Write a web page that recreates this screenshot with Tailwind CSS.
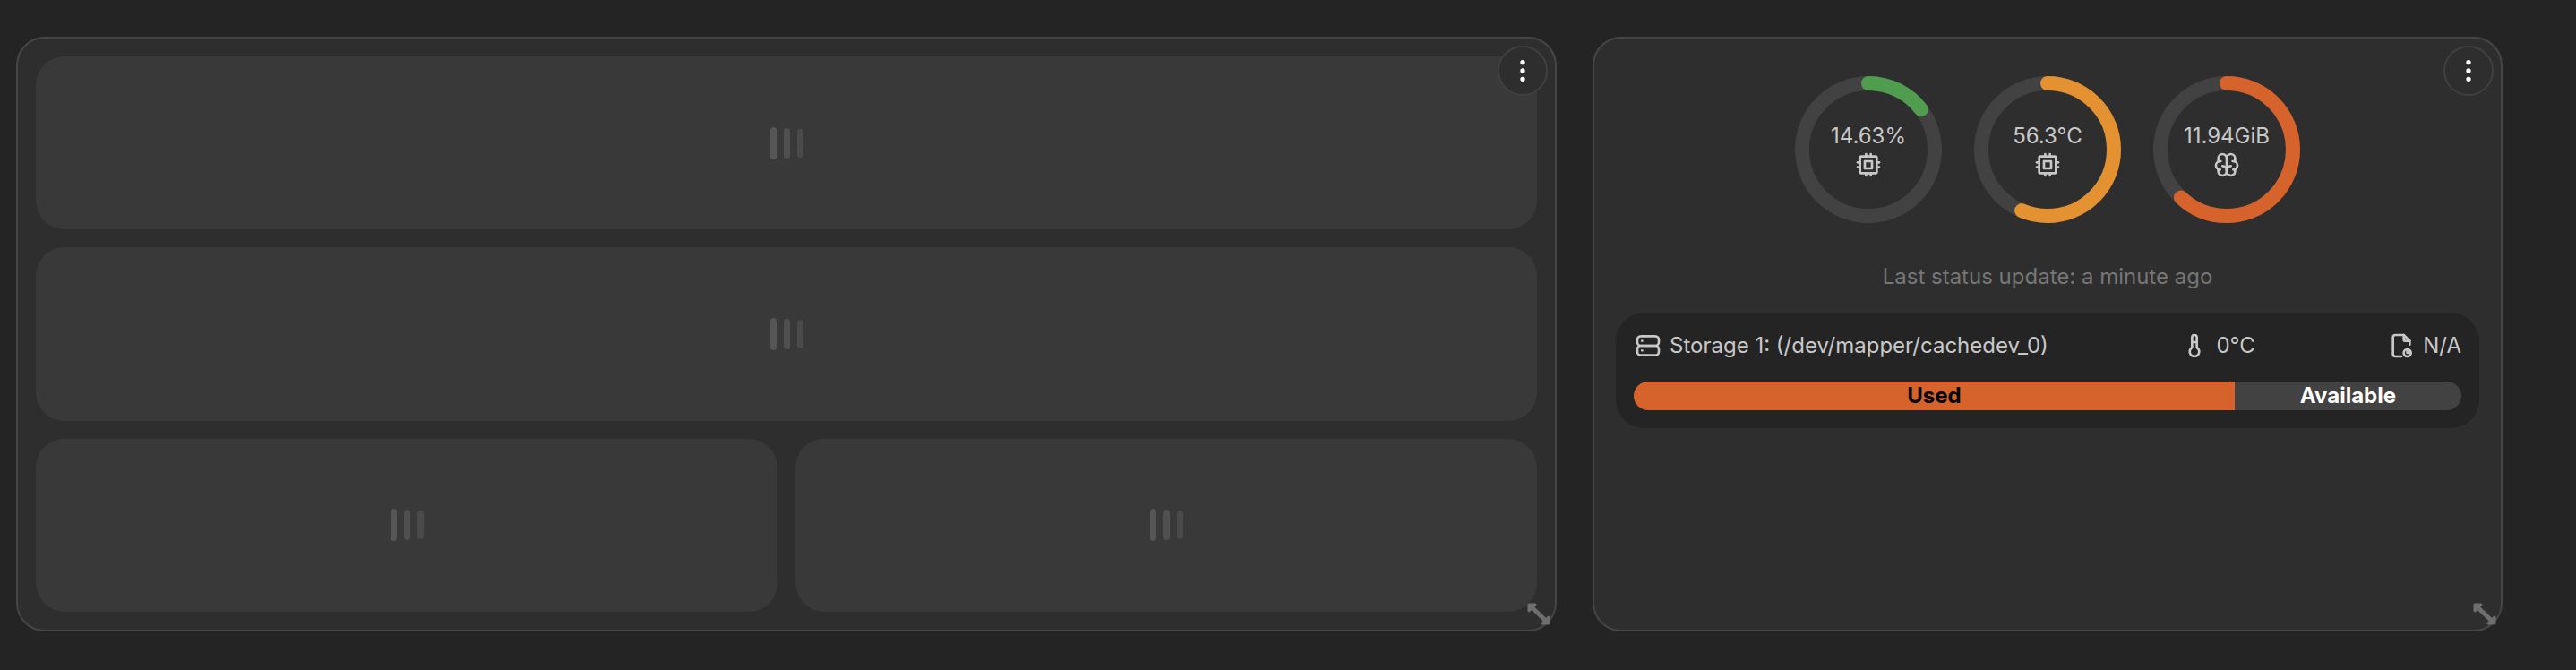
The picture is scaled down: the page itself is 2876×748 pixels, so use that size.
<!DOCTYPE html>
<html lang="en">
  <head>
    <meta charset="UTF-8" />
    <title>Dashboard</title>
    <script src="https://cdn.jsdelivr.net/npm/@tailwindcss/browser@4"></script>
  </head>
  <body class="min-h-screen bg-[#242424] font-['Inter',sans-serif] overflow-hidden">
    <div class="flex gap-10 pl-[18px] pt-[41px]">
      <!-- left card, skeletons still loading -->
      <div class="relative w-[1720px] h-[664px] bg-[#2e2e2e] border-2 border-[#464646] rounded-[32px] p-5 grid grid-cols-2 grid-rows-3 gap-5">
        <div class="col-span-2 bg-[#393939] rounded-[32px] flex items-center justify-center gap-2">
          <span class="w-[7px] h-9 rounded-full bg-[#565656]"></span>
          <span class="w-[7px] h-[34px] rounded-full bg-[#505050]"></span>
          <span class="w-[7px] h-8 rounded-full bg-[#4a4a4a]"></span>
        </div>
        <div class="col-span-2 bg-[#393939] rounded-[32px] flex items-center justify-center gap-2">
          <span class="w-[7px] h-9 rounded-full bg-[#565656]"></span>
          <span class="w-[7px] h-[34px] rounded-full bg-[#505050]"></span>
          <span class="w-[7px] h-8 rounded-full bg-[#4a4a4a]"></span>
        </div>
        <div class="bg-[#393939] rounded-[32px] flex items-center justify-center gap-2">
          <span class="w-[7px] h-9 rounded-full bg-[#565656]"></span>
          <span class="w-[7px] h-[34px] rounded-full bg-[#505050]"></span>
          <span class="w-[7px] h-8 rounded-full bg-[#4a4a4a]"></span>
        </div>
        <div class="bg-[#393939] rounded-[32px] flex items-center justify-center gap-2">
          <span class="w-[7px] h-9 rounded-full bg-[#565656]"></span>
          <span class="w-[7px] h-[34px] rounded-full bg-[#505050]"></span>
          <span class="w-[7px] h-8 rounded-full bg-[#4a4a4a]"></span>
        </div>
        <button class="absolute top-2 right-2 w-14 h-14 rounded-full bg-[#2e2e2e] border-2 border-[#404040] flex items-center justify-center">
          <svg class="w-8 h-8" viewBox="0 0 24 24" fill="none" stroke="#fff" stroke-width="2" stroke-linecap="round" stroke-linejoin="round"><path d="M11 12a1 1 0 1 0 2 0a1 1 0 1 0 -2 0" /><path d="M11 19a1 1 0 1 0 2 0a1 1 0 1 0 -2 0" /><path d="M11 5a1 1 0 1 0 2 0a1 1 0 1 0 -2 0" /></svg>
        </button>
        <svg class="absolute right-[5px] bottom-1 w-7 h-7" viewBox="0 0 28 28" fill="#6e6e6e" stroke="#6e6e6e" stroke-linejoin="round"><path d="M5 5L25 24" stroke-width="5" /><path d="M4 4h7l-7 7z" stroke-width="3" /><path d="M26 25h-7l7 -7z" stroke-width="3" /></svg>
      </div>

      <!-- right card, system stats -->
      <div class="relative w-[1016px] h-[664px] bg-[#2e2e2e] border-2 border-[#464646] rounded-[32px] px-6 pt-[42px]">
        <div class="flex justify-center gap-9">
          <div class="relative w-[164px] h-[164px]">
            <svg class="w-full h-full -rotate-90" viewBox="0 0 164 164" fill="none" stroke-width="16">
              <circle cx="82" cy="82" r="74" stroke="#424242" />
              <circle cx="82" cy="82" r="74" stroke="#509d4f" stroke-linecap="round" stroke-dasharray="68.02 464.96" />
            </svg>
            <div class="absolute inset-0 pt-[2px] flex flex-col items-center justify-center text-[#c8c8c8]">
              <span class="text-2xl leading-8">14.63%</span>
              <svg class="w-8 h-8" viewBox="0 0 24 24" fill="none" stroke="currentColor" stroke-width="2" stroke-linecap="round" stroke-linejoin="round"><path d="M5 6a1 1 0 0 1 1 -1h12a1 1 0 0 1 1 1v12a1 1 0 0 1 -1 1h-12a1 1 0 0 1 -1 -1z" /><path d="M9 9h6v6h-6z" /><path d="M3 10h2" /><path d="M3 14h2" /><path d="M10 3v2" /><path d="M14 3v2" /><path d="M21 10h-2" /><path d="M21 14h-2" /><path d="M14 21v-2" /><path d="M10 21v-2" /></svg>
            </div>
          </div>
          <div class="relative w-[164px] h-[164px]">
            <svg class="w-full h-full -rotate-90" viewBox="0 0 164 164" fill="none" stroke-width="16">
              <circle cx="82" cy="82" r="74" stroke="#424242" />
              <circle cx="82" cy="82" r="74" stroke="#e49132" stroke-linecap="round" stroke-dasharray="261.77 464.96" />
            </svg>
            <div class="absolute inset-0 pt-[2px] flex flex-col items-center justify-center text-[#c8c8c8]">
              <span class="text-2xl leading-8">56.3°C</span>
              <svg class="w-8 h-8" viewBox="0 0 24 24" fill="none" stroke="currentColor" stroke-width="2" stroke-linecap="round" stroke-linejoin="round"><path d="M5 6a1 1 0 0 1 1 -1h12a1 1 0 0 1 1 1v12a1 1 0 0 1 -1 1h-12a1 1 0 0 1 -1 -1z" /><path d="M9 9h6v6h-6z" /><path d="M3 10h2" /><path d="M3 14h2" /><path d="M10 3v2" /><path d="M14 3v2" /><path d="M21 10h-2" /><path d="M21 14h-2" /><path d="M14 21v-2" /><path d="M10 21v-2" /></svg>
            </div>
          </div>
          <div class="relative w-[164px] h-[164px]">
            <svg class="w-full h-full -rotate-90" viewBox="0 0 164 164" fill="none" stroke-width="16">
              <circle cx="82" cy="82" r="74" stroke="#424242" />
              <circle cx="82" cy="82" r="74" stroke="#d6622c" stroke-linecap="round" stroke-dasharray="288.3 464.96" />
            </svg>
            <div class="absolute inset-0 pt-[2px] flex flex-col items-center justify-center text-[#c8c8c8]">
              <span class="text-2xl leading-8">11.94GiB</span>
              <svg class="w-8 h-8" viewBox="0 0 24 24" fill="none" stroke="currentColor" stroke-width="2" stroke-linecap="round" stroke-linejoin="round"><path d="M15.5 13a3.5 3.5 0 0 0 -3.5 3.5v1a3.5 3.5 0 0 0 7 0v-1.8" /><path d="M8.5 13a3.5 3.5 0 0 1 3.5 3.5v1a3.5 3.5 0 0 1 -7 0v-1.8" /><path d="M17.5 16a3.5 3.5 0 0 0 0 -7h-.5" /><path d="M19 9.3v-2.8a3.5 3.5 0 0 0 -7 0" /><path d="M6.5 16a3.5 3.5 0 0 1 0 -7h.5" /><path d="M5 9.3v-2.8a3.5 3.5 0 0 1 7 0v10" /></svg>
            </div>
          </div>
        </div>

        <p class="mt-[42px] text-center text-2xl leading-9 text-[#767676]">Last status update: a minute ago</p>

        <div class="mt-[22px] bg-[#242424] rounded-[32px] p-5">
          <div class="flex justify-between items-center h-8 mt-[1px] text-2xl text-[#c8c8c8]">
            <div class="flex items-center gap-2">
              <svg class="w-8 h-8" viewBox="0 0 24 24" fill="none" stroke="currentColor" stroke-width="2" stroke-linecap="round" stroke-linejoin="round"><path d="M3 7a3 3 0 0 1 3 -3h12a3 3 0 0 1 3 3v2a3 3 0 0 1 -3 3h-12a3 3 0 0 1 -3 -3z" /><path d="M3 15a3 3 0 0 1 3 -3h12a3 3 0 0 1 3 3v2a3 3 0 0 1 -3 3h-12a3 3 0 0 1 -3 -3z" /><path d="M7 8v.01" /><path d="M7 16v.01" /></svg>
              <span>Storage 1: (/dev/mapper/cachedev_0)</span>
            </div>
            <div class="flex items-center gap-2">
              <svg class="w-8 h-8" viewBox="0 0 24 24" fill="none" stroke="currentColor" stroke-width="2" stroke-linecap="round" stroke-linejoin="round"><path d="M10 13.5a4 4 0 1 0 4 0v-8.5a2 2 0 0 0 -4 0v8.5" /><path d="M10 9l4 0" /></svg>
              <span>0°C</span>
            </div>
            <div class="flex items-center gap-2">
              <svg class="w-8 h-8" viewBox="0 0 24 24" fill="none" stroke="currentColor" stroke-width="2" stroke-linecap="round" stroke-linejoin="round"><path d="M14 3v4a1 1 0 0 0 1 1h4" /><path d="M12 21h-5a2 2 0 0 1 -2 -2v-14a2 2 0 0 1 2 -2h7l5 5v3" /><path d="M14 18a3 3 0 1 0 6 0a3 3 0 1 0 -6 0" /><path d="M17 16.5v1.5h1.5" /></svg>
              <span>N/A</span>
            </div>
          </div>
          <div class="mt-6 flex h-8 rounded-2xl overflow-hidden text-2xl font-bold leading-8 text-center">
            <div class="w-[72.6%] bg-[#d6622c] text-black">Used</div>
            <div class="flex-1 bg-[#424242] text-white">Available</div>
          </div>
        </div>

        <button class="absolute top-2 right-2 w-14 h-14 rounded-full bg-[#2e2e2e] border-2 border-[#404040] flex items-center justify-center">
          <svg class="w-8 h-8" viewBox="0 0 24 24" fill="none" stroke="#fff" stroke-width="2" stroke-linecap="round" stroke-linejoin="round"><path d="M11 12a1 1 0 1 0 2 0a1 1 0 1 0 -2 0" /><path d="M11 19a1 1 0 1 0 2 0a1 1 0 1 0 -2 0" /><path d="M11 5a1 1 0 1 0 2 0a1 1 0 1 0 -2 0" /></svg>
        </button>
        <svg class="absolute right-[5px] bottom-1 w-7 h-7" viewBox="0 0 28 28" fill="#6e6e6e" stroke="#6e6e6e" stroke-linejoin="round"><path d="M5 5L25 24" stroke-width="5" /><path d="M4 4h7l-7 7z" stroke-width="3" /><path d="M26 25h-7l7 -7z" stroke-width="3" /></svg>
      </div>
    </div>
  </body>
</html>
